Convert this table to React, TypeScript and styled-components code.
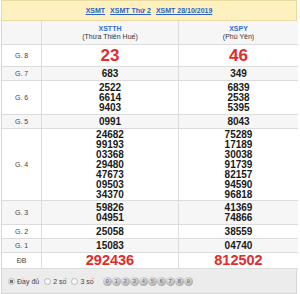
import styled, { createGlobalStyle } from 'styled-components'

const GlobalStyle = createGlobalStyle`
  body {
    margin: 0;
    background: #fff;
    font-family: "Liberation Sans", Arial, sans-serif;
  }
`

type Prize = {
  label: string
  left: string[]
  right: string[]
  height: number
  kind?: 'big' | 'special'
  shaded?: boolean
}

const prizes: Prize[] = [
  { label: 'G. 8', left: ['23'], right: ['46'], height: 22, kind: 'big' },
  { label: 'G. 7', left: ['683'], right: ['349'], height: 14, shaded: true },
  { label: 'G. 6', left: ['2522', '6614', '9403'], right: ['6839', '2538', '5395'], height: 34 },
  { label: 'G. 5', left: ['0991'], right: ['8043'], height: 14, shaded: true },
  {
    label: 'G. 4',
    left: ['24682', '99193', '03368', '29480', '47673', '09503', '34370'],
    right: ['75289', '17189', '30038', '91739', '82157', '94590', '96818'],
    height: 72,
  },
  { label: 'G. 3', left: ['59826', '04951'], right: ['41369', '74866'], height: 24, shaded: true },
  { label: 'G. 2', left: ['25058'], right: ['38559'], height: 14 },
  { label: 'G. 1', left: ['15083'], right: ['04740'], height: 14, shaded: true },
  { label: 'ĐB', left: ['292436'], right: ['812502'], height: 16, kind: 'special' },
]

const App = () => {
  return (
    <>
      <GlobalStyle />
      <Board>
        <TopBar>
          <TopLink>XSMT</TopLink>
          <TopLink>XSMT Thứ 2</TopLink>
          <TopLink>XSMT 28/10/2019</TopLink>
        </TopBar>
        <Grid>
          <HeadCell />
          <HeadCell>
            <Province>XSTTH</Province>
            <Region>(Thừa Thiên Huế)</Region>
          </HeadCell>
          <HeadCell>
            <Province>XSPY</Province>
            <Region>(Phú Yên)</Region>
          </HeadCell>
          {prizes.map((p) => (
            <Row key={p.label} $h={p.height} $shaded={p.shaded}>
              <Label>{p.label}</Label>
              <NumCell>
                {p.left.map((n) => (
                  <Num key={n} $kind={p.kind}>{n}</Num>
                ))}
              </NumCell>
              <NumCell>
                {p.right.map((n) => (
                  <Num key={n} $kind={p.kind}>{n}</Num>
                ))}
              </NumCell>
            </Row>
          ))}
        </Grid>
        <Footer>
          <Option>
            <Radio $on />
            Đầy đủ
          </Option>
          <Option>
            <Radio />
            2 số
          </Option>
          <Option>
            <Radio />
            3 số
          </Option>
          <Balls>
            {[0, 1, 2, 3, 4, 5, 6, 7, 8, 9].map((d) => (
              <Ball key={d}>{d}</Ball>
            ))}
          </Balls>
        </Footer>
      </Board>
    </>
  )
}
export default App

const Board = styled.div`
  width: 296px;
  margin-left: 1px;
  height: 294px;
  display: flex;
  flex-direction: column;
`
const TopBar = styled.div`
  height: 21px;
  box-sizing: border-box;
  background: #fdf1c0;
  border: 1px solid #ead9a0;
  display: flex;
  justify-content: center;
  align-items: center;
  gap: 5px;
`
const TopLink = styled.a`
  font-size: 7px;
  font-weight: bold;
  color: #2b62c4;
  text-decoration: underline;
  cursor: pointer;
`
const Grid = styled.div`
  display: grid;
  grid-template-columns: 40px 137px 119px;
  border-left: 1px solid #d6d6d6;
  border-right: 1px solid #d6d6d6;
  box-sizing: border-box;
`
const HeadCell = styled.div`
  height: 24px;
  box-sizing: border-box;
  background: #f6f6f6;
  border-right: 1px solid #dcdcdc;
  border-bottom: 1px solid #dcdcdc;
  display: flex;
  flex-direction: column;
  align-items: center;
  justify-content: center;
  gap: 1px;
  &:nth-child(3) {
    border-right: none;
  }
`
const Province = styled.div`
  font-size: 7px;
  font-weight: bold;
  color: #2f6fd1;
`
const Region = styled.div`
  font-size: 7px;
  color: #333;
`
const Row = styled.div<{ $h: number; $shaded?: boolean }>`
  display: contents;
  & > div {
    height: ${(p) => p.$h}px;
    box-sizing: border-box;
    background: ${(p) => (p.$shaded ? '#f6f6f6' : '#fff')};
    border-bottom: 1px solid #dcdcdc;
  }
`
const Label = styled.div`
  display: flex;
  align-items: center;
  justify-content: center;
  font-size: 7px;
  color: #444;
  border-right: 1px solid #dcdcdc;
`
const NumCell = styled.div`
  display: flex;
  flex-direction: column;
  align-items: center;
  justify-content: center;
  &:nth-child(2) {
    border-right: 1px solid #dcdcdc;
  }
`
const Num = styled.span<{ $kind?: 'big' | 'special' }>`
  font-weight: bold;
  font-size: ${(p) => (p.$kind === 'big' ? '17px' : p.$kind === 'special' ? '14.5px' : '10px')};
  line-height: ${(p) => (p.$kind ? '1' : '10px')};
  color: ${(p) => (p.$kind ? '#e22b2b' : '#1a1a1a')};
`
const Footer = styled.div`
  flex: 1;
  background: #ececec;
  border: 1px solid #d6d6d6;
  border-top: none;
  display: flex;
  align-items: center;
  padding-left: 6px;
  gap: 5px;
  font-size: 7px;
  color: #444;
`
const Option = styled.label`
  display: flex;
  align-items: center;
  gap: 2px;
`
const Radio = styled.span<{ $on?: boolean }>`
  width: 5px;
  height: 5px;
  border-radius: 50%;
  border: 1px solid #bbb;
  background: ${(p) => (p.$on ? 'radial-gradient(circle, #777 0 1.5px, #eee 2px)' : '#f7f7f7')};
`
const Balls = styled.div`
  display: flex;
  margin-left: 4px;
`
const Ball = styled.span`
  width: 9px;
  height: 9px;
  border-radius: 50%;
  background: radial-gradient(circle at 40% 35%, #f2f2f2, #bcbcbc 55%, #8c8c8c);
  display: flex;
  align-items: center;
  justify-content: center;
  font-size: 6px;
  font-weight: bold;
  color: #777;
`
